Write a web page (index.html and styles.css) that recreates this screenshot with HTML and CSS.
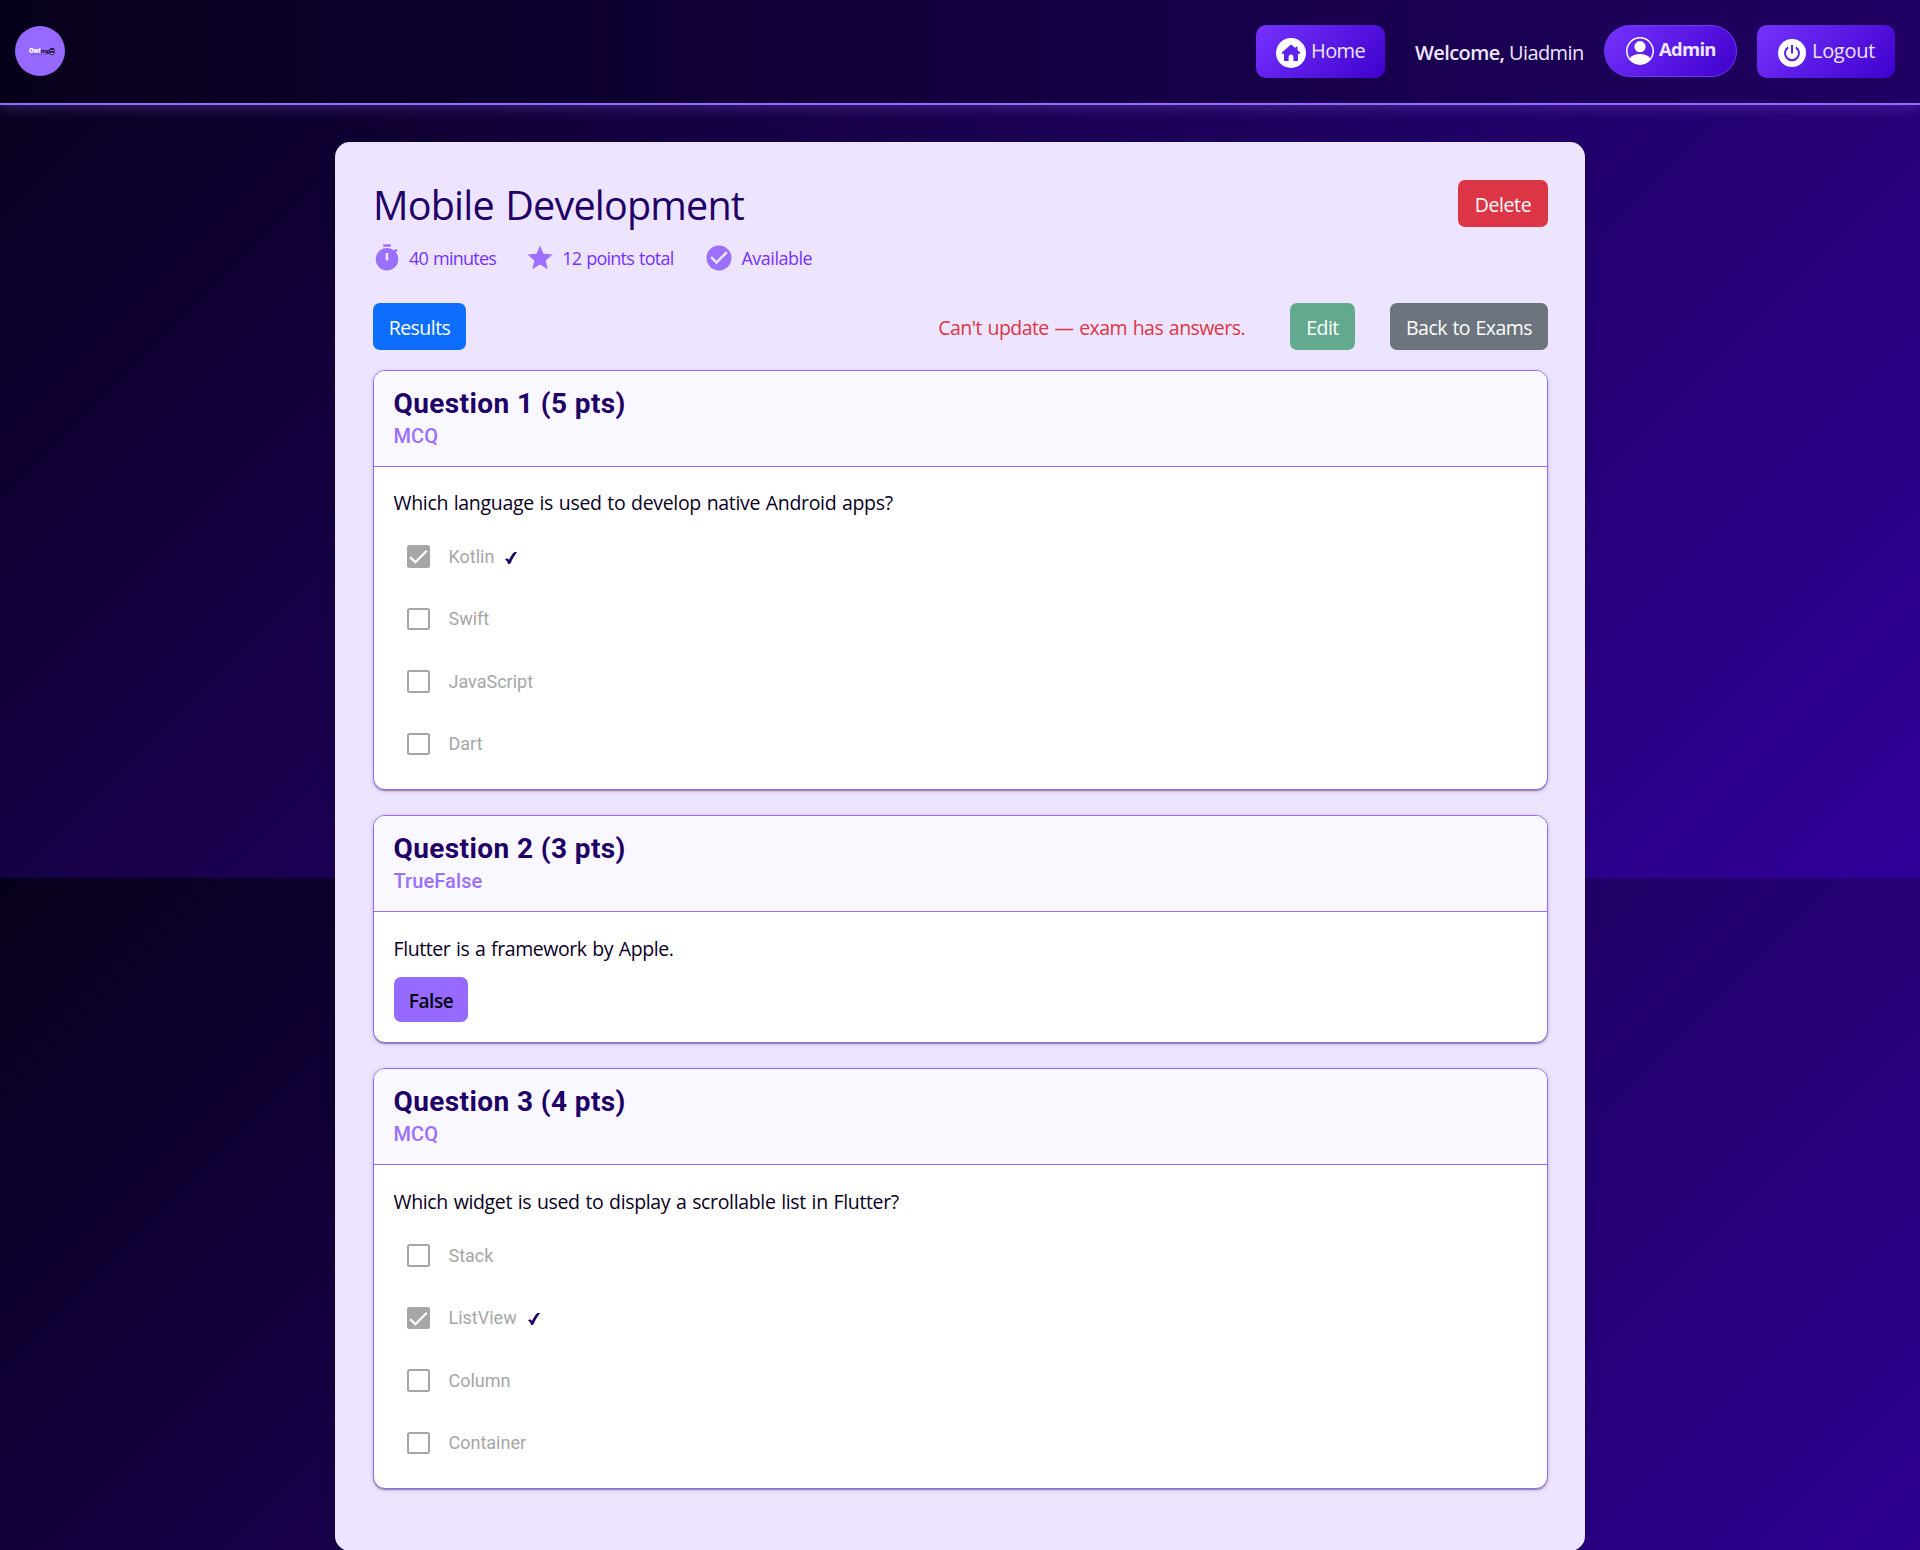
FILE: index.html
```html
<!DOCTYPE html>
<html lang="en">
<head>
<meta charset="utf-8">
<title>Mobile Development</title>
<link rel="stylesheet" href="styles.css">
</head>
<body>
<header class="navbar">
  <a class="logo">
    <span class="logo-word"><b>Owl</b>ing</span>
    <svg class="logo-owl" viewBox="0 0 12 14"><path d="M1 2 3 0.500h6L11 2v7c0 3-2 5-5 5S1 12 1 9z" fill="#14052e"/><circle cx="4" cy="5" r="1.600" fill="#c9b5ff"/><circle cx="8.200" cy="5" r="1.600" fill="#c9b5ff"/><path d="M3 9.500h6v2H4z" fill="#fff"/></svg>
    <i class="logo-line"></i>
  </a>
  <nav class="nav">
    <a class="nav-btn nav-home">
      <svg class="ico30" viewBox="0 0 30 30"><circle cx="15" cy="15" r="15" fill="#fff"/><path d="M15 6.500 5.800 14.500c-.5.6-.2 1.200.5 1.200H8V22c0 .7.4 1.100 1.100 1.100h3.500v-4.500c0-2.800 4.800-2.800 4.800 0v4.500h3.500c.7 0 1.100-.4 1.100-1.100v-6.300h1.700c.7 0 1-.6.5-1.200L21.500 12V8.700h-2v1.600L15.800 7q-.4-.4-.8-.5z" fill="#5f22ec"/></svg>
      <span>Home</span>
    </a>
    <span class="welcome"><b>Welcome,</b> Uiadmin</span>
    <a class="pill">
      <svg class="ico28" viewBox="0 0 28 28"><circle cx="14" cy="14" r="13.200" fill="none" stroke="#fff" stroke-width="1.500"/><circle cx="14" cy="9.700" r="5.600" fill="#fff"/><path d="M3.800 21.300C6 18.300 10 17 14 17s8 1.300 10.200 4.300C22 25 18.300 27.200 14 27.200S6 25 3.800 21.300z" fill="#fff"/></svg>
      <span>Admin</span>
    </a>
    <a class="nav-btn nav-logout">
      <svg class="ico28" viewBox="0 0 28 28"><circle cx="14" cy="14" r="14" fill="#fff"/><path d="M10.200 8.300a7 7 0 1 0 7.600 0M14 6v8.500" fill="none" stroke="#5a1fe3" stroke-width="2"/></svg>
      <span>Logout</span>
    </a>
  </nav>
</header>

<main class="panel">
  <div class="head">
    <h1>Mobile Development</h1>
    <a class="btn btn-danger">Delete</a>
  </div>
  <div class="meta">
    <span class="meta-item"><svg viewBox="0 0 24 24"><path fill-rule="evenodd" d="M15 1H9v2h6V1zM19.030 7.390l1.420-1.420c-.43-.51-.9-.99-1.410-1.410l-1.420 1.420C16.070 4.740 14.120 4 12 4c-4.970 0-9 4.030-9 9s4.020 9 9 9 9-4.030 9-9c0-2.120-.74-4.070-1.970-5.610zM13 14h-2V8h2v6z"/></svg>40 minutes</span>
    <span class="meta-item"><svg viewBox="0 0 24 24"><path d="M12 17.270 18.180 21l-1.640-7.030L22 9.240l-7.190-.61L12 2 9.190 8.630 2 9.240l5.460 4.730L5.820 21z"/></svg>12 points total</span>
    <span class="meta-item"><svg viewBox="0 0 24 24"><path d="M12 2C6.480 2 2 6.480 2 12s4.480 10 10 10 10-4.480 10-10S17.520 2 12 2zm-2 15-5-5 1.410-1.410L10 14.170l7.590-7.590L19 8l-9 9z"/></svg>Available</span>
  </div>
  <div class="toolbar">
    <a class="btn btn-primary">Results</a>
    <div class="toolbar-end">
      <span class="warn">Can't update — exam has answers.</span>
      <a class="btn btn-success">Edit</a>
      <a class="btn btn-secondary">Back to Exams</a>
    </div>
  </div>

  <section class="card">
    <div class="card-head"><h2>Question 1 (5 pts)</h2><p>MCQ</p></div>
    <div class="card-body">
      <p class="question">Which language is used to develop native Android apps?</p>
      <ul class="options">
        <li><span class="box checked"><svg viewBox="0 0 24 24"><path d="M3.300 12.700 8.700 18 20.700 6"/></svg></span>Kotlin<svg class="tick" viewBox="0 0 12 12"><path d="M0 7.600C1.300 6 3 6.300 4 8 5.500 4.500 7.700 1 9.300.2c.8-.3 1.800-.3 2.700 0C9.500 3 7 7.500 5.700 11.200c-1 .9-2 1-2.700.5C2.500 10 1.600 8.500 0 7.600z"/></svg></li>
        <li><span class="box"></span>Swift</li>
        <li><span class="box"></span>JavaScript</li>
        <li><span class="box"></span>Dart</li>
      </ul>
    </div>
  </section>

  <section class="card">
    <div class="card-head"><h2>Question 2 (3 pts)</h2><p>TrueFalse</p></div>
    <div class="card-body tf">
      <p class="question tight">Flutter is a framework by Apple.</p>
      <span class="answer">False</span>
    </div>
  </section>

  <section class="card">
    <div class="card-head"><h2>Question 3 (4 pts)</h2><p>MCQ</p></div>
    <div class="card-body">
      <p class="question">Which widget is used to display a scrollable list in Flutter?</p>
      <ul class="options">
        <li><span class="box"></span>Stack</li>
        <li><span class="box checked"><svg viewBox="0 0 24 24"><path d="M3.300 12.700 8.700 18 20.700 6"/></svg></span>ListView<svg class="tick" viewBox="0 0 12 12"><path d="M0 7.600C1.300 6 3 6.300 4 8 5.500 4.500 7.700 1 9.300.2c.8-.3 1.800-.3 2.700 0C9.500 3 7 7.500 5.700 11.200c-1 .9-2 1-2.700.5C2.500 10 1.600 8.500 0 7.600z"/></svg></li>
        <li><span class="box"></span>Column</li>
        <li><span class="box"></span>Container</li>
      </ul>
    </div>
  </section>
</main>
</body>
</html>
```
FILE: styles.css
```css
* { box-sizing: border-box; }
body {
  margin: 0;
  height: 1550px;
  overflow: hidden;
  font: 20px/30px "Open Sans", "Noto Sans", sans-serif;
  color: #0a001f;
  background: linear-gradient(135deg, #07001a 0%, #1e005e 50%, #2f0099 100%) 0 0 / 100% 878px repeat;
}
h1, h2, p, ul { margin: 0; padding: 0; }
svg { display: block; flex: none; }

/* top bar */
.navbar {
  position: relative;
  display: flex;
  align-items: flex-start;
  justify-content: space-between;
  height: 105px;
  padding: 25px 25px 0 15px;
  border-bottom: 2px solid #966aff;
  background: linear-gradient(90deg, #07001a, #1f0063);
  box-shadow: 0 3px 13px rgba(150, 106, 255, 0.3);
}
.logo {
  display: flex;
  position: relative;
  align-items: center;
  width: 50px;
  height: 50px;
  margin-top: 1px;
  padding-left: 14px;
  border-radius: 50%;
  background: #966aff;
}
.logo-word { font: 700 6px/8px "Open Sans", sans-serif; letter-spacing: -0.2px; color: #14052e; }
.logo-word b { color: #fff; }
.logo-owl { width: 6px; height: 7px; margin-left: 0; }
.logo-line { position: absolute; left: 15px; top: 28px; width: 17px; height: 1px; background: #8156dc; }
.nav { display: flex; align-items: flex-start; color: #ede5ff; }
.nav-btn {
  display: flex;
  align-items: center;
  height: 53px;
  padding-left: 20px;
  border-radius: 10px;
  background: linear-gradient(135deg, #7433ff, #4000cc);
}
.nav-btn span { line-height: 26px; padding-bottom: 1px; }
.nav-home { width: 129px; letter-spacing: -0.6px; }
.nav-home svg { margin: 3px 5px 0 0; }
.ico30 { width: 30px; height: 30px; }
.ico28 { width: 28px; height: 28px; }
.nav-logout { width: 138px; letter-spacing: -0.3px; }
.nav-logout svg { margin: 2px 6px 0 1px; }
.welcome { margin: 13px 20px 0 30px; width: 169px; letter-spacing: -0.6px; white-space: nowrap; }
.welcome b { font-weight: 600; }
.pill {
  display: flex;
  align-items: center;
  width: 133px;
  height: 52px;
  margin-right: 20px;
  padding-left: 21px;
  border: 1px solid #7433ff;
  border-radius: 26px;
  background: linear-gradient(135deg, #7433ff, #4000cc);
  font-size: 18.500px;
  font-weight: 700;
  letter-spacing: -0.75px;
}
.pill span { margin-left: 5px; padding-bottom: 4px; }

/* content panel */
.panel {
  width: 1250px;
  height: 1409px;
  margin: 37px auto 0;
  padding: 38px 37px 0 38px;
  border-radius: 15px;
  background: #ede5ff;
  box-shadow: 0 4px 15px rgba(0, 0, 0, 0.15);
}
.head { display: flex; justify-content: space-between; align-items: flex-start; height: 49px; }
h1 { padding-top: 1px; font-size: 39.500px; line-height: 49px; font-weight: 400; letter-spacing: -0.8px; word-spacing: 2px; color: #1f0066; }
.meta { display: flex; gap: 30px; height: 30px; margin-top: 14px; font-size: 18px; letter-spacing: -0.75px; word-spacing: 1px; color: #7433ff; }
.meta-item { display: flex; gap: 7px; }
.meta-item:last-child { margin-left: 2px; letter-spacing: -0.5px; }
.meta svg { width: 30px; height: 30px; margin-left: -1px; fill: #9b70ff; }
.toolbar { display: flex; justify-content: space-between; margin: 30px 0 20px; }
.toolbar-end { display: flex; align-items: flex-start; }
.btn {
  display: block;
  height: 47px;
  padding-top: 2px;
  border-radius: 7px;
  color: #fff;
  font-size: 19.500px;
  line-height: 45px;
  letter-spacing: -0.55px;
  word-spacing: 1px;
  text-align: center;
  white-space: nowrap;
}
.btn-primary { width: 93px; background: #0d6efd; }
.btn-danger { width: 90px; background: #dc3545; letter-spacing: -0.4px; }
.btn-success { width: 65px; margin: 0 35px 0 45px; background: #62a98e; }
.btn-secondary { width: 158px; background: #6c757d; }
.warn { padding-top: 2px; line-height: 45px; font-size: 19.500px; letter-spacing: -0.55px; word-spacing: 1.200px; color: #dc3545; }

/* question cards */
.card {
  overflow: hidden;
  margin-bottom: 25px;
  border: 1px solid #966aff;
  border-radius: 12px;
  background: #fff;
  box-shadow: 0 2px 1px -1px rgba(0, 0, 0, 0.2), 0 1px 1px rgba(0, 0, 0, 0.14), 0 1px 4px rgba(0, 0, 0, 0.2);
}
.card-head {
  height: 96px;
  padding: 16px 20px 0 19.500px;
  border-bottom: 1px solid #966aff;
  background: #f9f7ff;
  font-family: Roboto, sans-serif;
}
.card-head h2 { font-size: 28px; line-height: 34px; font-weight: 700; letter-spacing: 0.4px; color: #1f0066; }
.card-head p { margin-top: 2px; font-size: 20px; line-height: 26px; font-weight: 500; letter-spacing: 0.1px; color: #9b70ff; }
.card-body { padding: 21px 20px 13.750px; }
.question { margin-left: -0.500px; font-size: 19.500px; letter-spacing: -0.33px; word-spacing: 1px; }
.question.tight { margin-top: 1px; letter-spacing: -0.42px; }
.options { margin-top: 7.250px; list-style: none; }
.options li {
  display: flex;
  align-items: center;
  height: 62.500px;
  padding-left: 13px;
  font: 18px/26px Roboto, sans-serif;
  color: #a6a6a6;
}
.box { width: 23px; height: 22.500px; margin-right: 18.500px; border: 2px solid #a6a6a6; border-radius: 2.500px; }
.box.checked { background: #a6a6a6; border: 0; }
.box.checked svg { width: 23px; height: 23px; fill: none; stroke: #fff; stroke-width: 2.400; }
.tick { width: 12px; height: 12px; margin: 2px 0 0 11px; fill: #1f0066; }
.tf { padding-bottom: 20px; }
.answer {
  display: block;
  width: 74px;
  height: 45px;
  margin-top: 13px;
  padding-top: 2px;
  border-radius: 7px;
  background: #966aff;
  color: #05000f;
  font-size: 19px;
  font-weight: 600;
  line-height: 44px;
  letter-spacing: -0.4px;
  text-align: center;
}
.card:last-child .question { padding-top: 1px; letter-spacing: -0.35px; }
.card:last-child .card-body { padding-bottom: 13.500px; }
```
